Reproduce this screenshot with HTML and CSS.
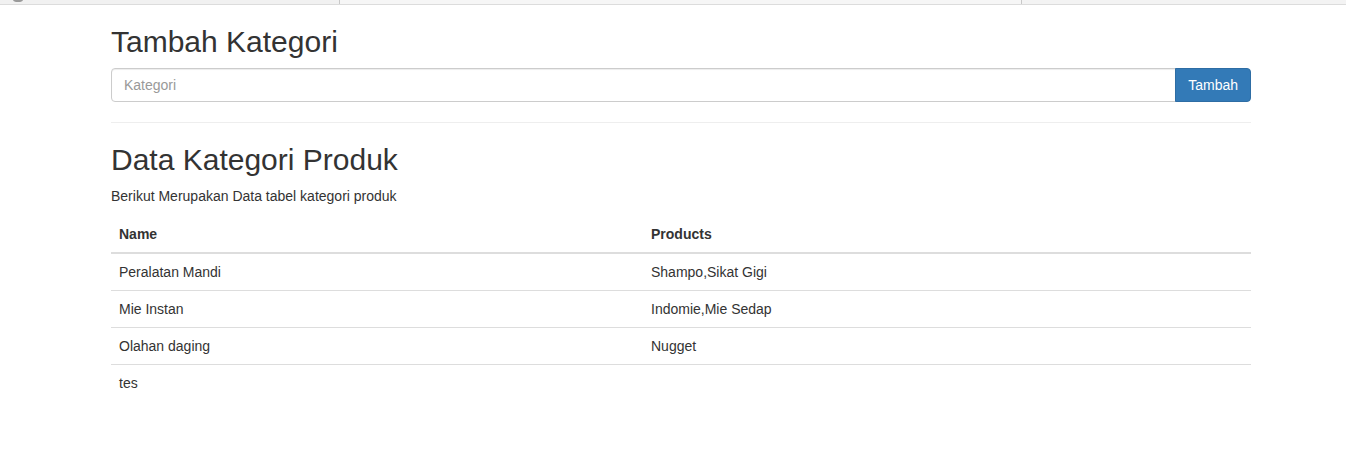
FILE: index.html
```html
<!DOCTYPE html>
<html lang="id">
<head>
<meta charset="utf-8">
<title>Kategori</title>
<link rel="stylesheet" href="styles.css">
</head>
<body>
<div class="tabstrip">
  <div class="tab tab-first"><span class="fav"></span></div>
  <div class="tab tab-mid"></div>
  <div class="tab tab-last"></div>
</div>
<div class="page">
  <div class="container">
    <h2 class="heading">Tambah Kategori</h2>
    <form class="input-group">
      <input class="form-control" type="text" placeholder="Kategori">
      <button class="btn btn-primary" type="button">Tambah</button>
    </form>
    <hr class="divider">
    <h2 class="heading">Data Kategori Produk</h2>
    <p class="lead-text">Berikut Merupakan Data tabel kategori produk</p>
    <table class="table">
      <colgroup><col class="col-name"><col></colgroup>
      <thead>
        <tr><th>Name</th><th>Products</th></tr>
      </thead>
      <tbody>
        <tr><td>Peralatan Mandi</td><td>Shampo,Sikat Gigi</td></tr>
        <tr><td>Mie Instan</td><td>Indomie,Mie Sedap</td></tr>
        <tr><td>Olahan daging</td><td>Nugget</td></tr>
        <tr><td>tes</td><td></td></tr>
      </tbody>
    </table>
  </div>
</div>
</body>
</html>
```
FILE: styles.css
```css
* { box-sizing: border-box; }
html, body { margin: 0; padding: 0; background: #fff; }
body {
  font-family: "Liberation Sans", Arial, Helvetica, sans-serif;
  font-size: 14px;
  line-height: 20px;
  color: #333;
}
.tabstrip {
  display: flex;
  height: 5px;
  background: #f3f3f3;
  border-bottom: 1px solid #dcdcdc;
  overflow: hidden;
}
.tab { height: 4px; border-right: 1px solid #c8c8c8; }
.tab-first { width: 340px; position: relative; background: #f1f1f1; }
.tab-mid { width: 682px; background: #f6f6f6; }
.tab-last { flex: 1; border-right: 0; background: #f3f3f3; }
.fav {
  position: absolute;
  left: 13px;
  top: -3px;
  width: 10px;
  height: 5px;
  border-radius: 50%;
  background: #9a9a9a;
}
.page { padding-left: 16px; }
.container { width: 1140px; margin: 0 auto; }
.heading {
  font-size: 30px;
  line-height: 33px;
  font-weight: 500;
  margin: 20px 0 10px;
  color: #333;
}
.input-group { display: flex; margin: 0; }
.form-control {
  flex: 1;
  height: 34px;
  padding: 6px 12px;
  font-family: inherit;
  font-size: 14px;
  line-height: 20px;
  color: #555;
  background: #fff;
  border: 1px solid #ccc;
  border-radius: 4px 0 0 4px;
  box-shadow: inset 0 1px 1px rgba(0,0,0,.075);
  outline: none;
}
.form-control::placeholder { color: #999; }
.btn {
  height: 34px;
  padding: 6px 12px;
  margin-left: -1px;
  font-family: inherit;
  font-size: 14px;
  line-height: 20px;
  border: 1px solid transparent;
  border-radius: 0 4px 4px 0;
  cursor: pointer;
}
.btn-primary { color: #fff; background: #337ab7; border-color: #2e6da4; }
.divider {
  margin: 20px 0;
  border: 0;
  border-top: 1px solid #eee;
  height: 0;
}
.lead-text { margin: 0 0 10px; }
.table {
  width: 100%;
  border-collapse: collapse;
  border-spacing: 0;
  table-layout: fixed;
  margin-bottom: 20px;
}
.col-name { width: 532px; }
.table th, .table td {
  padding: 8px;
  line-height: 20px;
  text-align: left;
  vertical-align: top;
}
.table thead th {
  font-weight: bold;
  border-bottom: 2px solid #ddd;
  vertical-align: bottom;
}
.table tbody td { border-top: 1px solid #ddd; height: 37px; }
.table tbody tr:first-child td { border-top: 0; }
```
